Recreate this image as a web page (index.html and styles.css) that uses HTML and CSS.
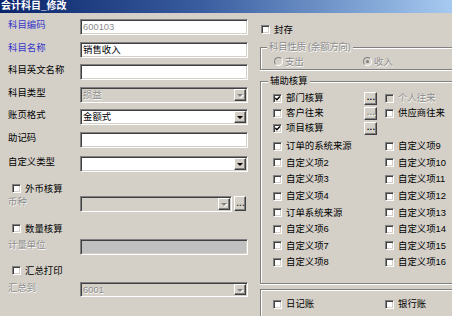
FILE: index.html
```html
<!DOCTYPE html>
<html lang="zh-CN">
<head>
<meta charset="utf-8">
<title>会计科目_修改</title>
<link rel="stylesheet" href="styles.css">
</head>
<body>
<div class="titlebar">会计科目_修改</div>
<div class="main">
  <div class="left">
    <div class="row gap6"><span class="lbl blue">科目编码</span><div class="field"><span class="val dis">600103</span></div></div>
    <div class="row gap7"><span class="lbl blue">科目名称</span><div class="field"><span class="val">销售收入</span></div></div>
    <div class="row gap6"><span class="lbl">科目英文名称</span><div class="field"></div></div>
    <div class="row gap7"><span class="lbl">科目类型</span><div class="field select off"><span class="val dis">损益</span><span class="arrow"><i class="tri"></i></span></div></div>
    <div class="row gap6"><span class="lbl">账页格式</span><div class="field select"><span class="val">金额式</span><span class="arrow"><i class="tri"></i></span></div></div>
    <div class="row gap7"><span class="lbl">助记码</span><div class="field"></div></div>
    <div class="row gap8"><span class="lbl">自定义类型</span><div class="field select"><span class="val"></span><span class="arrow"><i class="tri"></i></span></div></div>

    <div class="check lcheck gap10"><span class="cb"></span><span>外币核算</span></div>
    <div class="row gap1"><span class="lbl dis">币种</span><div class="field select off short"><span class="val"></span><span class="arrow"><i class="tri"></i></span></div><span class="btn dots small">...</span></div>

    <div class="check lcheck gap10"><span class="cb"></span><span>数量核算</span></div>
    <div class="row gap4"><span class="lbl dis">计量单位</span><div class="field grey"></div></div>

    <div class="check lcheck gap9"><span class="cb"></span><span>汇总打印</span></div>
    <div class="row gap5"><span class="lbl dis">汇总到</span><div class="field select off thin"><span class="val dis">6001</span><span class="arrow"><i class="tri"></i></span></div></div>
  </div>

  <div class="right">
    <div class="check seal"><span class="cb"></span><span>封存</span></div>

    <fieldset class="group nature">
      <legend class="dis">科目性质 (余额方向)</legend>
      <div class="radios">
        <div class="radio"><span class="rd"></span><span class="dis">支出</span></div>
        <div class="radio"><span class="rd on"></span><span class="dis">收入</span></div>
      </div>
    </fieldset>

    <fieldset class="group aux">
      <legend>辅助核算</legend>
      <div class="auxtop">
        <div class="check"><span class="cb"><svg viewBox="0 0 7 7"><path d="M1.3 3.1 L2.9 4.8 L5.9 1.6"/></svg></span><span>部门核算</span></div>
        <span class="btn dots">...</span>
        <div class="check"><span class="cb off"></span><span class="dis">个人往来</span></div>

        <div class="check"><span class="cb"></span><span>客户往来</span></div>
        <span class="btn dots muted">...</span>
        <div class="check"><span class="cb"></span><span>供应商往来</span></div>

        <div class="check"><span class="cb"><svg viewBox="0 0 7 7"><path d="M1.3 3.1 L2.9 4.8 L5.9 1.6"/></svg></span><span>项目核算</span></div>
        <span class="btn dots">...</span>
        <span></span>
      </div>
      <div class="auxlist">
        <div class="check"><span class="cb"></span><span>订单的系统来源</span></div>
        <div class="check"><span class="cb"></span><span>自定义项9</span></div>
        <div class="check"><span class="cb"></span><span>自定义项2</span></div>
        <div class="check"><span class="cb"></span><span>自定义项10</span></div>
        <div class="check"><span class="cb"></span><span>自定义项3</span></div>
        <div class="check"><span class="cb"></span><span>自定义项11</span></div>
        <div class="check"><span class="cb"></span><span>自定义项4</span></div>
        <div class="check"><span class="cb"></span><span>自定义项12</span></div>
        <div class="check"><span class="cb"></span><span>订单系统来源</span></div>
        <div class="check"><span class="cb"></span><span>自定义项13</span></div>
        <div class="check"><span class="cb"></span><span>自定义项6</span></div>
        <div class="check"><span class="cb"></span><span>自定义项14</span></div>
        <div class="check"><span class="cb"></span><span>自定义项7</span></div>
        <div class="check"><span class="cb"></span><span>自定义项15</span></div>
        <div class="check"><span class="cb"></span><span>自定义项8</span></div>
        <div class="check"><span class="cb"></span><span>自定义项16</span></div>
      </div>
    </fieldset>

    <fieldset class="group books">
      <div class="bookrow">
        <div class="check"><span class="cb"></span><span>日记账</span></div>
        <div class="check"><span class="cb"></span><span>银行账</span></div>
      </div>
    </fieldset>
  </div>
</div>
</body>
</html>
```

FILE: styles.css
```css
* { box-sizing: border-box; }
html, body { margin: 0; padding: 0; }
body {
  width: 452px;
  height: 316px;
  overflow: hidden;
  background: #d4d0c8;
  font-family: "Liberation Sans", "Noto Sans CJK SC", sans-serif;
  font-size: 9.4px;
  color: #000;
}

.titlebar {
  height: 13px;
  line-height: 12px;
  padding-left: 1px;
  color: #fff;
  font-weight: bold;
  font-size: 10px;
  white-space: nowrap;
  overflow: hidden;
  background: linear-gradient(to right, #0a246a 0%, #3a5ea0 45%, #a6caf0 100%);
}

.main { display: flex; }
.left { width: 259px; flex: none; }
.right { width: 193px; flex: none; }

/* left form rows */
.row { display: flex; align-items: flex-start; padding-left: 8px; }
.gap1 { margin-top: 1px; }
.gap4 { margin-top: 4px; }
.gap5 { margin-top: 5px; }
.gap6 { margin-top: 6px; }
.gap7 { margin-top: 7px; }
.gap8 { margin-top: 8px; }
.gap9 { margin-top: 9px; }
.gap10 { margin-top: 10px; }

.lbl { width: 72px; flex: none; line-height: 12px; white-space: nowrap; }
.blue { color: #3535c8; }
.dis { color: #8c8c8c; text-shadow: 0.6px 0.6px 0 #fff; }

.field {
  width: 168px;
  height: 16px;
  flex: none;
  display: flex;
  align-items: center;
  background: #fff;
  border: 1px solid;
  border-color: #808080 #fff #fff #808080;
  box-shadow: inset 1px 1px 0 #404040, inset -1px -1px 0 #d4d0c8;
}
.field.off { background: #d4d0c8; }
.field.grey { background: #c0c0c0; }
.field.short { width: 152px; }
.field.thin { height: 15px; }
.val { flex: 1; padding-left: 2px; line-height: 12px; white-space: nowrap; overflow: hidden; }

.arrow {
  width: 12px;
  height: 12px;
  margin-right: 1px;
  flex: none;
  display: flex;
  align-items: center;
  justify-content: center;
  background: #d4d0c8;
  border: 1px solid;
  border-color: #fff #404040 #404040 #fff;
  box-shadow: inset -1px -1px 0 #808080;
}
.field.thin .arrow { height: 11px; }
.tri {
  display: block;
  width: 0;
  height: 0;
  border-left: 3px solid transparent;
  border-right: 3px solid transparent;
  border-top: 3px solid #000;
  margin-top: 1px;
}
.off .tri { border-top-color: #808080; filter: drop-shadow(1px 1px 0 #fff); }

.btn {
  flex: none;
  width: 13px;
  height: 13px;
  display: flex;
  align-items: flex-end;
  justify-content: center;
  background: #d4d0c8;
  border: 1px solid;
  border-color: #fff #404040 #404040 #fff;
  box-shadow: inset -1px -1px 0 #808080;
  font-family: "DejaVu Sans", sans-serif;
  font-size: 7px;
  font-weight: bold;
  line-height: 7px;
  padding-bottom: 2px;
  padding-left: 1px;
  letter-spacing: 0.2px;
}
.btn.small { width: 12px; height: 15px; margin-left: 2px; color: #303030; }
.btn.muted { color: #808080; text-shadow: 1px 1px 0 #fff; }

/* checkboxes */
.check { display: flex; align-items: center; gap: 4px; height: 13px; line-height: 12px; white-space: nowrap; }
.lcheck { padding-left: 12px; }
.cb {
  flex: none;
  width: 9px;
  height: 9px;
  background: #fff;
  border: 1px solid;
  border-color: #808080 #fff #fff #808080;
  box-shadow: inset 1px 1px 0 #404040, inset -1px -1px 0 #d4d0c8;
}
.cb.off { background: #d4d0c8; }
.cb svg { display: block; width: 7px; height: 7px; }
.cb path { fill: none; stroke: #000; stroke-width: 1.4; }

/* right column */
.seal { margin-top: 10px; padding-left: 2px; }

.group {
  margin: 0 0 0 1px;
  padding: 0;
  min-width: 0;
  width: 192px;
  border: 1px solid #808080;
  border-right: 0;
  box-shadow: inset 1px 1px 0 #fff, 0 1px 0 #fff;
}
.group legend {
  padding: 0 2px;
  line-height: 12px;
  background: #d4d0c8;
  white-space: nowrap;
}
.nature { margin-top: 5px; padding: 2px 0 2px 13px; }
.nature legend { margin-left: -7px; letter-spacing: -0.2px; }
.radios { display: flex; }
.radio { width: 89px; display: flex; align-items: center; gap: 2px; height: 12px; }
.rd {
  flex: none;
  width: 9px;
  height: 9px;
  border-radius: 50%;
  background: #d4d0c8;
  border: 1px solid;
  border-color: #808080 #fff #fff #808080;
  display: flex;
  align-items: center;
  justify-content: center;
}
.rd.on::after {
  content: "";
  width: 3px;
  height: 3px;
  border-radius: 50%;
  background: #808080;
}

.aux { margin-top: 5px; padding: 4px 0 12px 12px; }
.aux legend { margin-left: -5px; }
.auxtop {
  display: grid;
  grid-template-columns: 91px 21px auto;
  grid-auto-rows: 14px;
  row-gap: 1px;
  align-items: center;
}
.auxlist {
  margin-top: 3px;
  display: grid;
  grid-template-columns: 112px auto;
  grid-auto-rows: 16.6px;
  align-items: center;
}

.books { margin-top: 5px; padding: 8px 0 5px 12px; border-bottom: 0; box-shadow: inset 1px 1px 0 #fff; }
.bookrow { display: grid; grid-template-columns: 112px auto; }
```
